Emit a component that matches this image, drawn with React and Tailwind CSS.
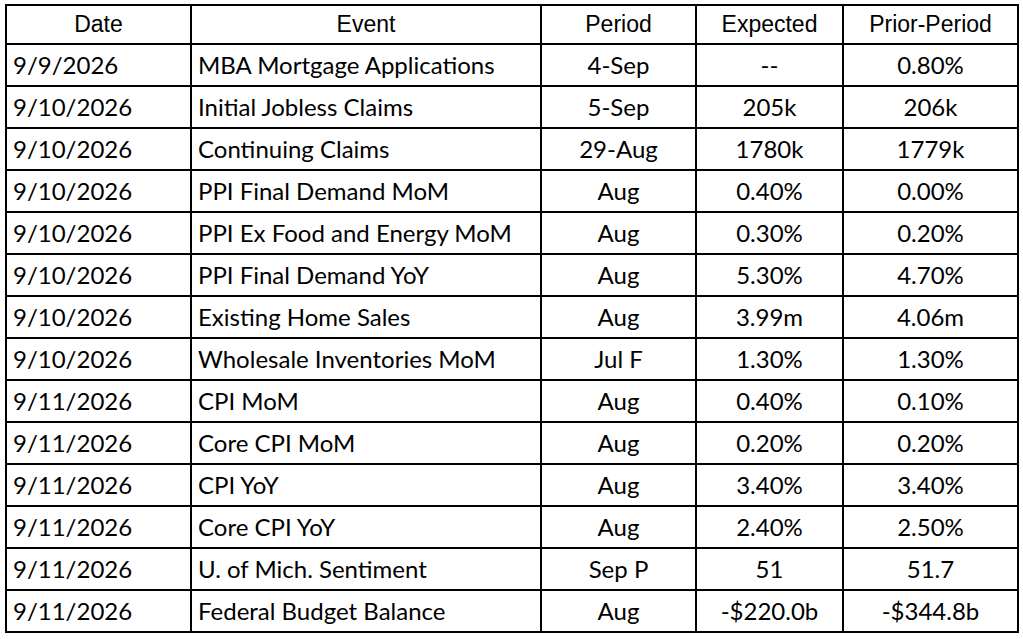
import React from "react";

const rows = [
  ["9/9/2026", "MBA Mortgage Applications", "4-Sep", "--", "0.80%"],
  ["9/10/2026", "Initial Jobless Claims", "5-Sep", "205k", "206k"],
  ["9/10/2026", "Continuing Claims", "29-Aug", "1780k", "1779k"],
  ["9/10/2026", "PPI Final Demand MoM", "Aug", "0.40%", "0.00%"],
  ["9/10/2026", "PPI Ex Food and Energy MoM", "Aug", "0.30%", "0.20%"],
  ["9/10/2026", "PPI Final Demand YoY", "Aug", "5.30%", "4.70%"],
  ["9/10/2026", "Existing Home Sales", "Aug", "3.99m", "4.06m"],
  ["9/10/2026", "Wholesale Inventories MoM", "Jul F", "1.30%", "1.30%"],
  ["9/11/2026", "CPI MoM", "Aug", "0.40%", "0.10%"],
  ["9/11/2026", "Core CPI MoM", "Aug", "0.20%", "0.20%"],
  ["9/11/2026", "CPI YoY", "Aug", "3.40%", "3.40%"],
  ["9/11/2026", "Core CPI YoY", "Aug", "2.40%", "2.50%"],
  ["9/11/2026", "U. of Mich. Sentiment", "Sep P", "51", "51.7"],
  ["9/11/2026", "Federal Budget Balance", "Aug", "-$220.0b", "-$344.8b"],
];

const headers = ["Date", "Event", "Period", "Expected", "Prior-Period"];

const App = () => {
  return (
    <div className="bg-white w-[1023px] h-[639px] pl-[5px] pt-[4px]">
      <table className="table-fixed border-collapse border-2 border-black w-[1014px] text-black">
        <colgroup>
          <col className="w-[185px]" />
          <col className="w-[350px]" />
          <col className="w-[155px]" />
          <col className="w-[147px]" />
          <col className="w-[175px]" />
        </colgroup>
        <thead>
          <tr className="h-[39px]">
            {headers.map((h) => (
              <th
                key={h}
                className="border-2 border-black p-0 text-center font-normal text-[23px] font-['Liberation_Sans',Arial,sans-serif]"
              >
                {h}
              </th>
            ))}
          </tr>
        </thead>
        <tbody className="font-['Lato',sans-serif] text-[24px]">
          {rows.map((r, i) => (
            <tr key={i} className="h-[42px]">
              <td className="border-2 border-black px-[6px] py-0 text-left">{r[0]}</td>
              <td className="border-2 border-black px-[6px] py-0 text-left">{r[1]}</td>
              <td className="border-2 border-black p-0 text-center">{r[2]}</td>
              <td className="border-2 border-black p-0 text-center">{r[3]}</td>
              <td className="border-2 border-black p-0 text-center">{r[4]}</td>
            </tr>
          ))}
        </tbody>
      </table>
    </div>
  );
};

export default App;
